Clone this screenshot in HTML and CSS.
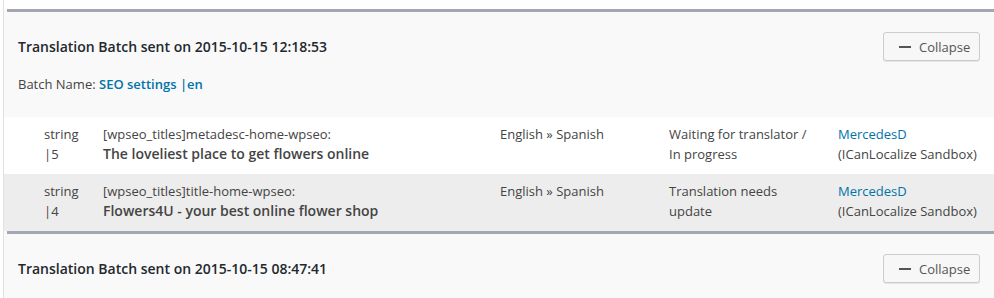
FILE: index.html
```html
<!DOCTYPE html>
<html>

<head>
  <meta charset="UTF-8">
  <title>Translation Jobs</title>
  <link rel="stylesheet" href="styles.css">
</head>

<body>

  <div class="jobs">

    <div class="batch">
      <div class="batch-rule"></div>
      <div class="batch-head">
        <div class="batch-top">
          <h3 class="batch-title">Translation Batch sent on 2015-10-15 12:18:53</h3>
          <button class="collapse-btn"><span class="dash"></span>Collapse</button>
        </div>
        <p class="batch-name">Batch Name: <a href="#">SEO settings |en</a></p>
      </div>

      <div class="job-row">
        <div class="job-type">string<br>|5</div>
        <div class="job-title">[wpseo_titles]metadesc-home-wpseo:<br><strong>The loveliest place to get flowers online</strong></div>
        <div>English &raquo; Spanish</div>
        <div>Waiting for translator /<br>In progress</div>
        <div><a href="#">MercedesD</a><br>(ICanLocalize Sandbox)</div>
      </div>

      <div class="job-row alt">
        <div class="job-type">string<br>|4</div>
        <div class="job-title">[wpseo_titles]title-home-wpseo:<br><strong>Flowers4U - your best online flower shop</strong></div>
        <div>English &raquo; Spanish</div>
        <div>Translation needs<br>update</div>
        <div><a href="#">MercedesD</a><br>(ICanLocalize Sandbox)</div>
      </div>
    </div>

    <div class="batch">
      <div class="batch-rule"></div>
      <div class="batch-head">
        <div class="batch-top">
          <h3 class="batch-title">Translation Batch sent on 2015-10-15 08:47:41</h3>
          <button class="collapse-btn"><span class="dash"></span>Collapse</button>
        </div>
      </div>
    </div>

  </div>

</body>

</html>
```

FILE: styles.css
```css
body * {
  box-sizing: border-box;
}

body {
  margin: 0;
  background: #fff;
  font-family: "Open Sans", Arial, sans-serif;
  font-size: 13px;
  line-height: 20px;
  color: #444;
}

a {
  color: #0073aa;
  text-decoration: none;
}

.jobs {
  margin-left: 3px;
  border-left: 1px solid #e1e1e1;
  padding-top: 9px;
  min-height: 298px;
}

.batch {
  background: #f9f9f9;
}

.batch-rule {
  height: 3px;
  margin-left: 3px;
  background: #a2a7b1;
}

.batch-head {
  padding: 20px 14px 23px 14px;
}

.batch-top {
  display: flex;
  align-items: center;
  justify-content: space-between;
}

.batch-title {
  margin: 0;
  font-size: 14px;
  font-weight: 600;
  color: #23282d;
}

.collapse-btn {
  display: flex;
  align-items: center;
  height: 29px;
  width: 97px;
  padding: 0 0 0 15px;
  border: 1px solid #cccccc;
  border-radius: 3px;
  background: #f7f7f7;
  box-shadow: 0 1px 0 #e6e6e6;
  font-family: inherit;
  font-size: 13px;
  color: #555;
  cursor: pointer;
}

.dash {
  width: 12px;
  height: 2px;
  margin-right: 8px;
  background: #555;
}

.batch-name {
  margin: 13px 0 0;
}

.batch-name a {
  font-weight: 600;
}

.job-row {
  display: grid;
  grid-template-columns: 59px 397px 169px 169px 1fr;
  padding: 7px 0 10px 40px;
  background: #fff;
}

.job-row.alt {
  background: #ededed;
}

.job-title strong {
  font-size: 14px;
  font-weight: 600;
}
```
